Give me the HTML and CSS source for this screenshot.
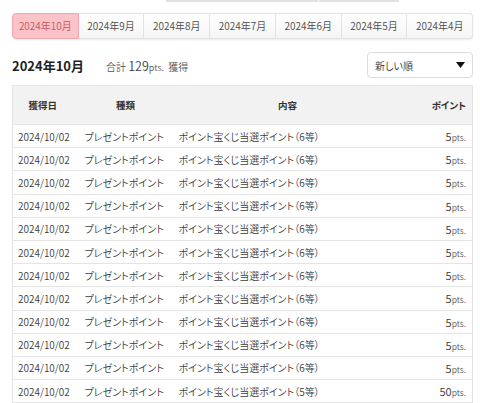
FILE: index.html
```html
<!DOCTYPE html>
<html lang="ja">
<head>
    <meta charset="UTF-8">
    <meta name="viewport" content="width=device-width, initial-scale=1.0">
    <title>ポイント履歴</title>
    <link rel="stylesheet" href="styles.css">
</head>
<body>
    <div class="top-strip">
        <span class="strip-btn wide"></span>
        <span class="strip-btn"></span>
    </div>

    <ul class="months">
        <li class="active">2024年10月</li>
        <li>2024年9月</li>
        <li>2024年8月</li>
        <li>2024年7月</li>
        <li>2024年6月</li>
        <li>2024年5月</li>
        <li>2024年4月</li>
    </ul>

    <div class="summary">
        <h2>2024年10月</h2>
        <p class="total">合計 <span class="num">129</span><span class="unit">pts.</span> 獲得</p>
        <div class="sort">
            <span>新しい順</span>
            <svg width="9" height="6" viewBox="0 0 9 6"><path d="M0 0h9L4.5 6z" fill="#111"/></svg>
        </div>
    </div>

    <table class="history">
        <thead>
            <tr>
                <th class="c-date">獲得日</th>
                <th class="c-type">種類</th>
                <th class="c-desc">内容</th>
                <th class="c-pts">ポイント</th>
            </tr>
        </thead>
        <tbody>
            <tr><td class="c-date">2024/10/02</td><td class="c-type">プレゼントポイント</td><td class="c-desc">ポイント宝くじ当選ポイント（6等）</td><td class="c-pts"><span class="num">5</span><span class="unit">pts.</span></td></tr>
            <tr><td class="c-date">2024/10/02</td><td class="c-type">プレゼントポイント</td><td class="c-desc">ポイント宝くじ当選ポイント（6等）</td><td class="c-pts"><span class="num">5</span><span class="unit">pts.</span></td></tr>
            <tr><td class="c-date">2024/10/02</td><td class="c-type">プレゼントポイント</td><td class="c-desc">ポイント宝くじ当選ポイント（6等）</td><td class="c-pts"><span class="num">5</span><span class="unit">pts.</span></td></tr>
            <tr><td class="c-date">2024/10/02</td><td class="c-type">プレゼントポイント</td><td class="c-desc">ポイント宝くじ当選ポイント（6等）</td><td class="c-pts"><span class="num">5</span><span class="unit">pts.</span></td></tr>
            <tr><td class="c-date">2024/10/02</td><td class="c-type">プレゼントポイント</td><td class="c-desc">ポイント宝くじ当選ポイント（6等）</td><td class="c-pts"><span class="num">5</span><span class="unit">pts.</span></td></tr>
            <tr><td class="c-date">2024/10/02</td><td class="c-type">プレゼントポイント</td><td class="c-desc">ポイント宝くじ当選ポイント（6等）</td><td class="c-pts"><span class="num">5</span><span class="unit">pts.</span></td></tr>
            <tr><td class="c-date">2024/10/02</td><td class="c-type">プレゼントポイント</td><td class="c-desc">ポイント宝くじ当選ポイント（6等）</td><td class="c-pts"><span class="num">5</span><span class="unit">pts.</span></td></tr>
            <tr><td class="c-date">2024/10/02</td><td class="c-type">プレゼントポイント</td><td class="c-desc">ポイント宝くじ当選ポイント（6等）</td><td class="c-pts"><span class="num">5</span><span class="unit">pts.</span></td></tr>
            <tr><td class="c-date">2024/10/02</td><td class="c-type">プレゼントポイント</td><td class="c-desc">ポイント宝くじ当選ポイント（6等）</td><td class="c-pts"><span class="num">5</span><span class="unit">pts.</span></td></tr>
            <tr><td class="c-date">2024/10/02</td><td class="c-type">プレゼントポイント</td><td class="c-desc">ポイント宝くじ当選ポイント（6等）</td><td class="c-pts"><span class="num">5</span><span class="unit">pts.</span></td></tr>
            <tr><td class="c-date">2024/10/02</td><td class="c-type">プレゼントポイント</td><td class="c-desc">ポイント宝くじ当選ポイント（6等）</td><td class="c-pts"><span class="num">5</span><span class="unit">pts.</span></td></tr>
            <tr><td class="c-date">2024/10/02</td><td class="c-type">プレゼントポイント</td><td class="c-desc">ポイント宝くじ当選ポイント（5等）</td><td class="c-pts"><span class="num">50</span><span class="unit">pts.</span></td></tr>
        </tbody>
    </table>
</body>
</html>
```

FILE: styles.css
```css
body {
    margin: 0;
    padding: 0 7px 0 12px;
    font-family: "Noto Sans CJK JP", "Noto Sans", sans-serif;
    font-feature-settings: "palt" 1;
    font-weight: 350;
    color: #3c3c3c;
    background-color: #fff;
}

/* bottom edge of the buttons above, cut off by the scroll */
.top-strip {
    display: flex;
    margin-left: 154px;
    height: 2px;
    gap: 1px;
}
.strip-btn {
    width: 80px;
    background-color: #e2e2e2;
}
.strip-btn.wide {
    width: 152px;
}

.months {
    list-style: none;
    display: flex;
    margin: 11px 0 0;
    padding: 0;
    border-radius: 4px;
    box-shadow: 0 1px 2px rgba(0, 0, 0, 0.08);
}
.months li {
    flex: 1;
    height: 24px;
    line-height: 24px;
    text-align: center;
    font-size: 10px;
    color: #4a4a4a;
    background: linear-gradient(#fff, #f5f5f5);
    border: 1px solid #e2e2e2;
    border-left: none;
}
.months li:first-child {
    border-left: 1px solid #e2e2e2;
    border-radius: 4px 0 0 4px;
}
.months li:last-child {
    border-radius: 0 4px 4px 0;
}
.months li.active {
    background: #f9c3c7;
    border-color: #f3a6ad;
    color: #c9535e;
}

.summary {
    display: flex;
    align-items: center;
    margin-top: 13px;
    height: 26px;
}
.summary h2 {
    margin: 0;
    width: 94px;
    font-size: 13px;
    font-weight: bold;
    color: #222;
}
.total {
    margin: 0;
    flex: 1;
    font-size: 10px;
    color: #555;
}
.total .num {
    font-size: 12.5px;
    color: #3c3c3c;
}
.total .unit {
    font-size: 9px;
    margin-right: 2px;
}
.sort {
    display: flex;
    align-items: center;
    justify-content: space-between;
    box-sizing: border-box;
    width: 106px;
    height: 26px;
    padding: 0 7px;
    border: 1px solid #dcdcdc;
    border-radius: 4px;
    font-size: 10px;
    color: #333;
}

.history {
    width: 100%;
    margin-top: 7px;
    table-layout: fixed;
    border-collapse: collapse;
    border: 1px solid #e4e4e4;
    font-size: 10px;
}
.history th,
.history td {
    box-sizing: border-box;
    padding: 0;
}
.history th {
    height: 39px;
    background-color: #f2f2f2;
    font-weight: bold;
    font-size: 9.5px;
    color: #333;
    text-align: center;
}
.history td {
    height: 23.2px;
    border-top: 1px solid #e4e4e4;
    white-space: nowrap;
}
.c-date {
    width: 60px;
}
td.c-date {
    padding-left: 5px;
}
.c-type {
    width: 106px;
}
td.c-type {
    padding-left: 12px;
}
.c-desc {
    width: 218px;
}
.history .c-pts {
    text-align: right;
    padding-right: 6px;
}
.c-pts .num {
    font-size: 11px;
    color: #333;
}
.c-pts .unit {
    font-size: 8.5px;
    color: #555;
}
```
